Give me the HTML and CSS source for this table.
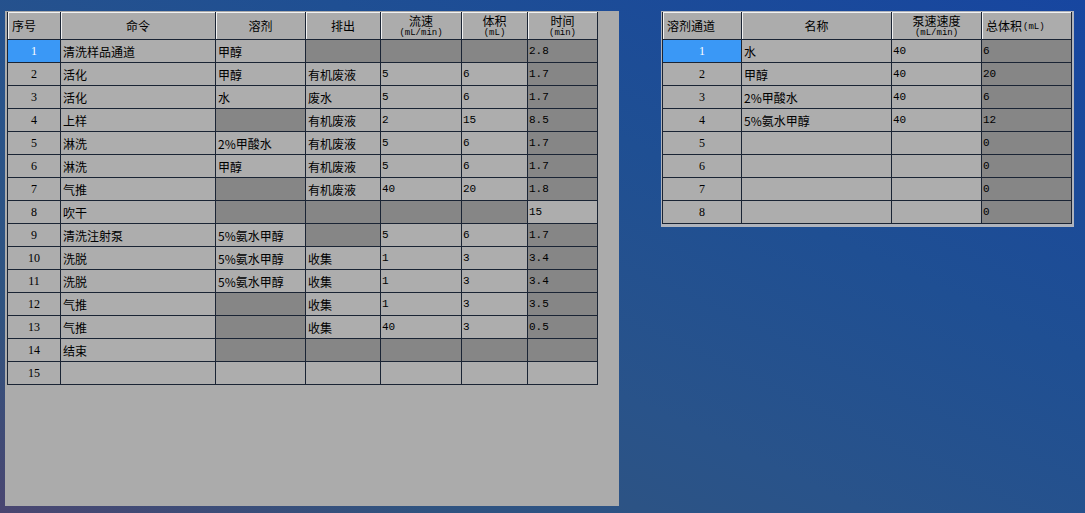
FILE: index.html
```html
<!DOCTYPE html>
<html lang="zh-CN">
<head>
<meta charset="utf-8">
<title>方法编辑</title>
<link rel="stylesheet" href="styles.css">
</head>
<body>
<div class="screen">
  <section class="panel panel-left">
    <div class="grid grid-steps">
      <div class="h h-left">序号</div>
      <div class="h">命令</div>
      <div class="h">溶剂</div>
      <div class="h">排出</div>
      <div class="h"><span class="h1">流速</span><span class="h2">(mL/min)</span></div>
      <div class="h"><span class="h1">体积</span><span class="h2">(mL)</span></div>
      <div class="h"><span class="h1">时间</span><span class="h2">(min)</span></div>

      <div class="c sel">1</div><div class="c">清洗样品通道</div><div class="c">甲醇</div><div class="c d"></div><div class="c d"></div><div class="c d"></div><div class="c d n">2.8</div>
      <div class="c ctr">2</div><div class="c">活化</div><div class="c">甲醇</div><div class="c">有机废液</div><div class="c n">5</div><div class="c n">6</div><div class="c d n">1.7</div>
      <div class="c ctr">3</div><div class="c">活化</div><div class="c">水</div><div class="c">废水</div><div class="c n">5</div><div class="c n">6</div><div class="c d n">1.7</div>
      <div class="c ctr">4</div><div class="c">上样</div><div class="c d"></div><div class="c">有机废液</div><div class="c n">2</div><div class="c n">15</div><div class="c d n">8.5</div>
      <div class="c ctr">5</div><div class="c">淋洗</div><div class="c">2%甲酸水</div><div class="c">有机废液</div><div class="c n">5</div><div class="c n">6</div><div class="c d n">1.7</div>
      <div class="c ctr">6</div><div class="c">淋洗</div><div class="c">甲醇</div><div class="c">有机废液</div><div class="c n">5</div><div class="c n">6</div><div class="c d n">1.7</div>
      <div class="c ctr">7</div><div class="c">气推</div><div class="c d"></div><div class="c">有机废液</div><div class="c n">40</div><div class="c n">20</div><div class="c d n">1.8</div>
      <div class="c ctr">8</div><div class="c">吹干</div><div class="c d"></div><div class="c d"></div><div class="c d"></div><div class="c d"></div><div class="c n">15</div>
      <div class="c ctr">9</div><div class="c">清洗注射泵</div><div class="c">5%氨水甲醇</div><div class="c d"></div><div class="c n">5</div><div class="c n">6</div><div class="c d n">1.7</div>
      <div class="c ctr">10</div><div class="c">洗脱</div><div class="c">5%氨水甲醇</div><div class="c">收集</div><div class="c n">1</div><div class="c n">3</div><div class="c d n">3.4</div>
      <div class="c ctr">11</div><div class="c">洗脱</div><div class="c">5%氨水甲醇</div><div class="c">收集</div><div class="c n">1</div><div class="c n">3</div><div class="c d n">3.4</div>
      <div class="c ctr">12</div><div class="c">气推</div><div class="c d"></div><div class="c">收集</div><div class="c n">1</div><div class="c n">3</div><div class="c d n">3.5</div>
      <div class="c ctr">13</div><div class="c">气推</div><div class="c d"></div><div class="c">收集</div><div class="c n">40</div><div class="c n">3</div><div class="c d n">0.5</div>
      <div class="c ctr">14</div><div class="c">结束</div><div class="c d"></div><div class="c d"></div><div class="c d"></div><div class="c d"></div><div class="c d"></div>
      <div class="c ctr">15</div><div class="c"></div><div class="c"></div><div class="c"></div><div class="c"></div><div class="c"></div><div class="c"></div>
    </div>
  </section>

  <section class="panel panel-right">
    <div class="grid grid-solvents">
      <div class="h h-left">溶剂通道</div>
      <div class="h">名称</div>
      <div class="h"><span class="h1">泵速速度</span><span class="h2">(mL/min)</span></div>
      <div class="h h-left">总体积<span class="h2 inl">(mL)</span></div>

      <div class="c sel">1</div><div class="c">水</div><div class="c n">40</div><div class="c d n">6</div>
      <div class="c ctr">2</div><div class="c">甲醇</div><div class="c n">40</div><div class="c d n">20</div>
      <div class="c ctr">3</div><div class="c">2%甲酸水</div><div class="c n">40</div><div class="c d n">6</div>
      <div class="c ctr">4</div><div class="c">5%氨水甲醇</div><div class="c n">40</div><div class="c d n">12</div>
      <div class="c ctr">5</div><div class="c"></div><div class="c"></div><div class="c d n">0</div>
      <div class="c ctr">6</div><div class="c"></div><div class="c"></div><div class="c d n">0</div>
      <div class="c ctr">7</div><div class="c"></div><div class="c"></div><div class="c d n">0</div>
      <div class="c ctr">8</div><div class="c"></div><div class="c"></div><div class="c d n">0</div>
    </div>
  </section>
</div>
</body>
</html>
```

FILE: styles.css
```css
html, body {
  margin: 0;
  padding: 0;
}

body {
  width: 1085px;
  height: 513px;
  overflow: hidden;
  background: linear-gradient(to bottom left, #1746a0 0%, #1f4f93 35%, #29538a 60%, #2f5380 80%, #4a4670 100%);
  font-family: "Noto Sans CJK SC", "Liberation Sans", sans-serif;
  font-size: 12px;
  color: #000;
}

.screen {
  display: flex;
  align-items: flex-start;
  gap: 42px;
  padding: 11px 0 0 5px;
  box-sizing: border-box;
  height: 513px;
}

.panel {
  background: #ababab;
  box-sizing: border-box;
}

.panel-left {
  width: 614px;
  height: 495px;
  padding: 1px 0 0 2px;
}

.panel-right {
  width: 413px;
  height: 216px;
  padding: 1px 0 0 1px;
  background: #b0b4bc;
}

.grid {
  display: grid;
  gap: 1px;
  background: #1a2434;
  padding: 0 1px 1px 1px;
  width: fit-content;
  grid-template-rows: 27px;
  grid-auto-rows: 22px;
}

.grid-steps {
  grid-template-columns: 52px 154px 89px 74px 80px 65px 69px;
}

.grid-solvents {
  grid-template-columns: 78px 149px 89px 89px;
}

.h {
  background: #acacac;
  box-shadow: inset 1px 1px 0 #f2f2f2;
  display: flex;
  flex-direction: column;
  align-items: center;
  justify-content: center;
  line-height: 12px;
  white-space: nowrap;
  font-size: 12px;
  padding-top: 1px;
  box-sizing: border-box;
}

.h-left {
  flex-direction: row;
  justify-content: flex-start;
  align-items: center;
  padding-left: 4px;
}

.h1 {
  display: block;
  height: 12px;
  line-height: 12px;
  font-size: 12px;
}

.h2 {
  display: block;
  height: 10px;
  font-family: "Liberation Mono", monospace;
  font-size: 9px;
  line-height: 10px;
  margin-top: 1px;
}

.h2.inl {
  margin-top: 0;
  margin-left: 1px;
  padding-top: 1px;
}

.c {
  background: #adadad;
  display: flex;
  align-items: center;
  padding-left: 2px;
  white-space: nowrap;
  overflow: hidden;
  font-size: 12px;
}

.c.d {
  background: #868686;
}

.n {
  font-family: "Liberation Mono", monospace;
  font-size: 11px;
  padding-left: 1px;
}

.ctr {
  justify-content: center;
  padding-left: 0;
  font-family: "Liberation Serif", serif;
  font-size: 12px;
}

.sel {
  background: #3a98f6;
  color: #fff;
  justify-content: center;
  padding-left: 0;
  font-family: "Liberation Serif", serif;
}
```
